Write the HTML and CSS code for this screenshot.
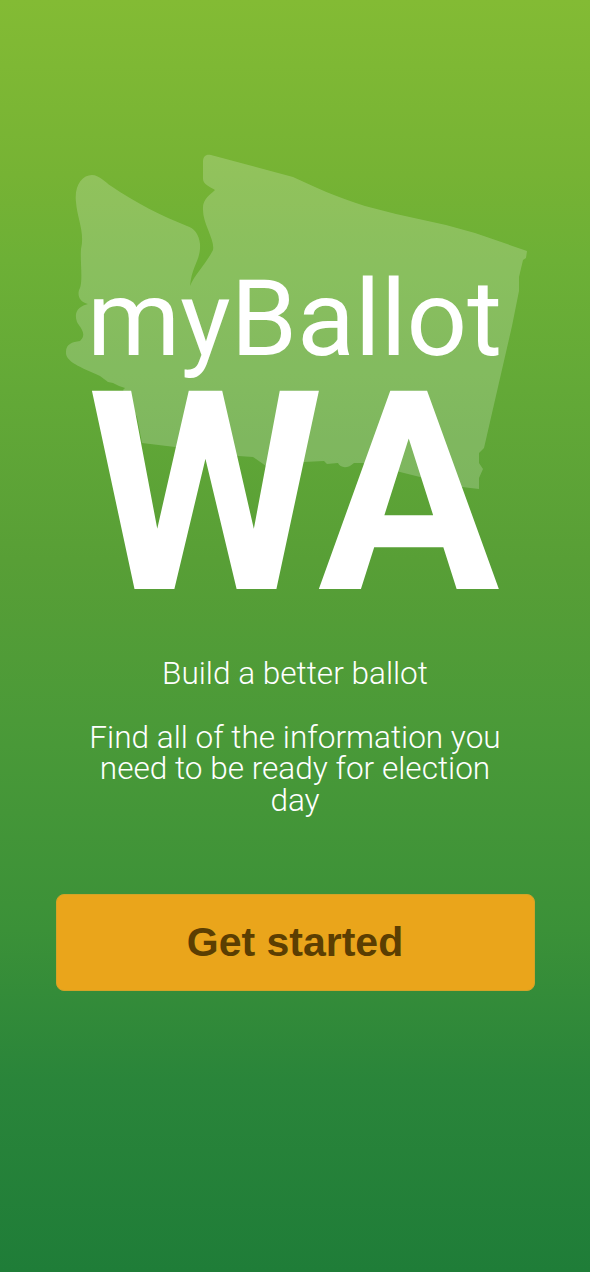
FILE: index.html
```html
<!DOCTYPE html>
<html lang="en">
<head>
<meta charset="utf-8">
<title>myBallot WA</title>
<link rel="stylesheet" href="styles.css">
</head>
<body>
<main class="welcome">
  <h1 class="logo">
    <svg class="logo-art" viewBox="60 150 470 445" role="img" aria-label="myBallot WA">
      <path class="state" d="M76 202C74 186 82 175 92 175C99 175 105 182 111 186C136 203 162 216 187 226C194 228 199 234 200 244C201 260 192 265 190 286C195 274 206 264 213 250C215 240 203 224 203 210C202 199 210 195 215 190C210 187 203 184 203 179L203 162C203 156 206 154 211 155L293 177C315 187 336 197 365 206L396 214L446 225L475 233L527 251L526 258L523 260L519 277L519 291L512 326L484 448L479 453L479 463L483 469L479 478L479 489L462 487L420 477L396 471L362 463L354 463C348 469 340 468 338 463L327 464L324 461L304 462L266 466L256 459L253 457L238 456L205 448L175 447L142 443L137 417L123 390L125 388L119 386L113 383L108 382L100 376C86 369 65 363 66 352C66 344 72 342 80 341C88 334 79 326 77 322C73 311 80 306 88 304C78 302 77 293 80 288C83 279 80 260 81 249C85 232 77 218 76 202Z"/>
      <text class="name" x="87" y="355" textLength="415" lengthAdjust="spacingAndGlyphs">myBallot</text>
      <text class="abbr" x="87.4" y="589" textLength="235.8" lengthAdjust="spacingAndGlyphs">W</text>
      <text class="abbr" x="318" y="589" textLength="181.5" lengthAdjust="spacingAndGlyphs">A</text>
    </svg>
  </h1>
  <p class="tagline">Build a better ballot</p>
  <p class="intro">Find all of the information you<br>need to be ready for election<br>day</p>
  <button class="start" type="button">Get started</button>
</main>
</body>
</html>
```
FILE: styles.css
```css
body {
  margin: 0;
}

.welcome {
  box-sizing: border-box;
  width: 590px;
  height: 1272px;
  padding-top: 150px;
  display: flex;
  flex-direction: column;
  align-items: center;
  background: linear-gradient(#83bb34 0, #76b334 175px, #6db036 260px, #63a937 390px, #589f36 560px, #4b9a38 720px, #3b9138 930px, #2a853a 1080px, #1f7d38 1272px);
  color: #fff;
  font-family: Roboto, sans-serif;
}

.logo {
  margin: 0;
  line-height: 0;
}

.logo-art {
  width: 470px;
  height: 445px;
  overflow: visible;
}

.state {
  fill: #fff;
  fill-opacity: 0.2;
}

.name {
  fill: #fff;
  font: 400 106.5px Roboto, sans-serif;
}

.abbr {
  fill: #fff;
  font: 700 279px Roboto, sans-serif;
}

.tagline,
.intro {
  margin: 0;
  font-size: 31.55px;
  line-height: 31.7px;
  font-weight: 300;
  text-align: center;
  white-space: nowrap;
}

.tagline {
  margin-top: 63px;
}

.intro {
  margin-top: 32px;
}

.start {
  width: 479px;
  height: 97px;
  margin-top: 77px;
  padding: 0;
  border: 1px solid #d3a327;
  border-radius: 8px;
  background: #eaa51b;
  color: #5b3e02;
  font: 700 41px "Liberation Sans", Arial, sans-serif;
}
```
